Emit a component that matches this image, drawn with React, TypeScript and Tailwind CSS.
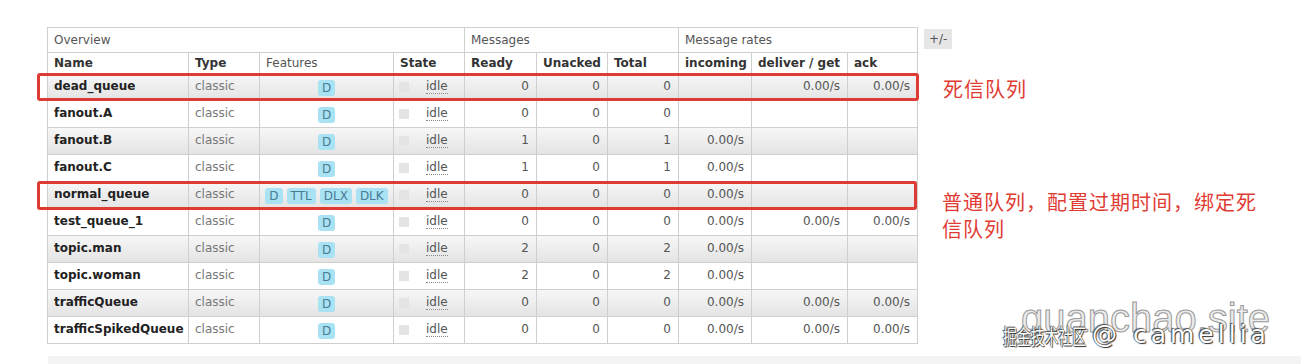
import React from "react";

type Queue = {
  name: string;
  features: string[];
  ready: number;
  unacked: number;
  total: number;
  incoming: string;
  deliver: string;
  ack: string;
};

const queues: Queue[] = [
  { name: "dead_queue", features: ["D"], ready: 0, unacked: 0, total: 0, incoming: "", deliver: "0.00/s", ack: "0.00/s" },
  { name: "fanout.A", features: ["D"], ready: 0, unacked: 0, total: 0, incoming: "", deliver: "", ack: "" },
  { name: "fanout.B", features: ["D"], ready: 1, unacked: 0, total: 1, incoming: "0.00/s", deliver: "", ack: "" },
  { name: "fanout.C", features: ["D"], ready: 1, unacked: 0, total: 1, incoming: "0.00/s", deliver: "", ack: "" },
  { name: "normal_queue", features: ["D", "TTL", "DLX", "DLK"], ready: 0, unacked: 0, total: 0, incoming: "0.00/s", deliver: "", ack: "" },
  { name: "test_queue_1", features: ["D"], ready: 0, unacked: 0, total: 0, incoming: "0.00/s", deliver: "0.00/s", ack: "0.00/s" },
  { name: "topic.man", features: ["D"], ready: 2, unacked: 0, total: 2, incoming: "0.00/s", deliver: "", ack: "" },
  { name: "topic.woman", features: ["D"], ready: 2, unacked: 0, total: 2, incoming: "0.00/s", deliver: "", ack: "" },
  { name: "trafficQueue", features: ["D"], ready: 0, unacked: 0, total: 0, incoming: "0.00/s", deliver: "0.00/s", ack: "0.00/s" },
  { name: "trafficSpikedQueue", features: ["D"], ready: 0, unacked: 0, total: 0, incoming: "0.00/s", deliver: "0.00/s", ack: "0.00/s" },
];

const cell = "border border-[#cfcfcf] px-[6px] align-middle";
const num = `${cell} text-right pr-[7px] text-[#555]`;

export default function App() {
  return (
    <div
      className="relative w-[1301px] h-[364px] overflow-hidden bg-white text-[12px] text-[#333]"
      style={{ fontFamily: '"DejaVu Sans", Verdana, sans-serif' }}
    >
      <div className="flex items-start pt-[27px] pl-[47px]">
        <table className="border-collapse table-fixed w-[870px]">
          <colgroup>
            <col className="w-[141px]" />
            <col className="w-[71px]" />
            <col className="w-[134px]" />
            <col className="w-[71px]" />
            <col className="w-[72px]" />
            <col className="w-[71px]" />
            <col className="w-[71px]" />
            <col className="w-[73px]" />
            <col className="w-[96px]" />
            <col className="w-[70px]" />
          </colgroup>
          <thead>
            <tr className="h-[25px] text-[#555]">
              <th colSpan={4} className={`${cell} text-left font-normal`}>Overview</th>
              <th colSpan={3} className={`${cell} text-left font-normal`}>Messages</th>
              <th colSpan={3} className={`${cell} text-left font-normal`}>Message rates</th>
            </tr>
            <tr className="h-[21px] text-[#333]">
              <th className={`${cell} text-left font-bold`}>Name</th>
              <th className={`${cell} text-left font-bold`}>Type</th>
              <th className={`${cell} text-left font-normal text-[#555]`}>Features</th>
              <th className={`${cell} text-left font-bold`}>State</th>
              <th className={`${cell} text-left font-bold`}>Ready</th>
              <th className={`${cell} text-left font-bold`}>Unacked</th>
              <th className={`${cell} text-left font-bold`}>Total</th>
              <th className={`${cell} text-left font-bold`}>incoming</th>
              <th className={`${cell} text-left font-bold`}>deliver / get</th>
              <th className={`${cell} text-left font-bold`}>ack</th>
            </tr>
          </thead>
          <tbody>
            {queues.map((q, i) => (
              <tr
                key={q.name}
                className={
                  i % 2 === 0
                    ? "h-[27px] bg-gradient-to-b from-[#f7f7f7] to-[#e3e3e3]"
                    : "h-[27px] bg-white"
                }
              >
                <td className={`${cell} font-bold text-[#222] whitespace-nowrap pb-[2px]`}>{q.name}</td>
                <td className={`${cell} text-[#777] pb-[2px]`}>classic</td>
                <td className={`${cell} pt-[2px]`}>
                  <div className="flex justify-center gap-[4px]">
                    {q.features.map(f => (
                      <span
                        key={f}
                        className="rounded-[3px] bg-[#a9e3f3] px-[4px] h-[16px] leading-[16px] text-[#4a7a94]"
                      >
                        {f}
                      </span>
                    ))}
                  </div>
                </td>
                <td className={`${cell} pl-[5px]`}>
                  <div className="flex items-center">
                    <span className="w-[10px] h-[10px] bg-[#e4e4e4]" />
                    <span className="ml-[17px] text-[#555] border-b border-dotted border-[#888] leading-[13px]">
                      idle
                    </span>
                  </div>
                </td>
                <td className={`${num} pb-[2px]`}>{q.ready}</td>
                <td className={`${num} pb-[2px]`}>{q.unacked}</td>
                <td className={`${num} pb-[2px]`}>{q.total}</td>
                <td className={`${num} pb-[2px]`}>{q.incoming}</td>
                <td className={`${num} pb-[2px]`}>{q.deliver}</td>
                <td className={`${num} pb-[2px]`}>{q.ack}</td>
              </tr>
            ))}
          </tbody>
        </table>
        <button className="ml-[6px] mt-[2px] h-[20px] px-[5px] bg-[#e6e6e6] text-[#555] text-[12px] leading-[20px]">
          +/-
        </button>
      </div>

      {/* bottom strip */}
      <div className="ml-[48px] mt-[12px] h-[12px] bg-[#f3f3f3]" />

      {/* red callout boxes */}
      <div className="absolute left-[37px] top-[73px] w-[882px] h-[28px] border-[3px] border-[#dd3b33] rounded-[3px]" />
      <div className="absolute left-[37px] top-[181px] w-[880px] h-[29px] border-[3px] border-[#dd3b33] rounded-[3px]" />

      {/* annotations */}
      <div
        className="absolute left-[943px] top-[75px] text-[20px] leading-[27px] tracking-[1px] text-[#e03c34]"
        style={{ fontFamily: '"Noto Sans CJK SC", sans-serif' }}
      >
        死信队列
      </div>
      <div
        className="absolute left-[942px] top-[188px] w-[330px] text-[20px] leading-[27px] tracking-[1px] text-[#e03c34]"
        style={{ fontFamily: '"Noto Sans CJK SC", sans-serif' }}
      >
        普通队列，配置过期时间，绑定死信队列
      </div>

      {/* watermark */}
      <div
        className="absolute left-[1021px] top-[296px] text-[40px] leading-[44px] text-[#ececec] [-webkit-text-stroke:1px_#9a9a9a]"
        style={{ fontFamily: '"Liberation Sans", Arial, sans-serif' }}
      >
        guanchao.site
      </div>
      <div
        className="absolute left-[1003px] top-[322px] flex items-end whitespace-nowrap text-white [text-shadow:0_0_1px_#222,1px_1px_1px_#333,-1px_-1px_1px_#555]"
      >
        <span
          className="inline-block w-[84px] text-[21px] leading-[26px] origin-left scale-x-[0.66]"
          style={{ fontFamily: '"Noto Sans CJK SC", sans-serif' }}
        >
          掘金技术社区
        </span>
        <span
          className="ml-[5px] text-[25px] leading-[26px] tracking-[4px]"
          style={{ fontFamily: '"DejaVu Sans", sans-serif' }}
        >
          @ camellia
        </span>
      </div>
    </div>
  );
}
